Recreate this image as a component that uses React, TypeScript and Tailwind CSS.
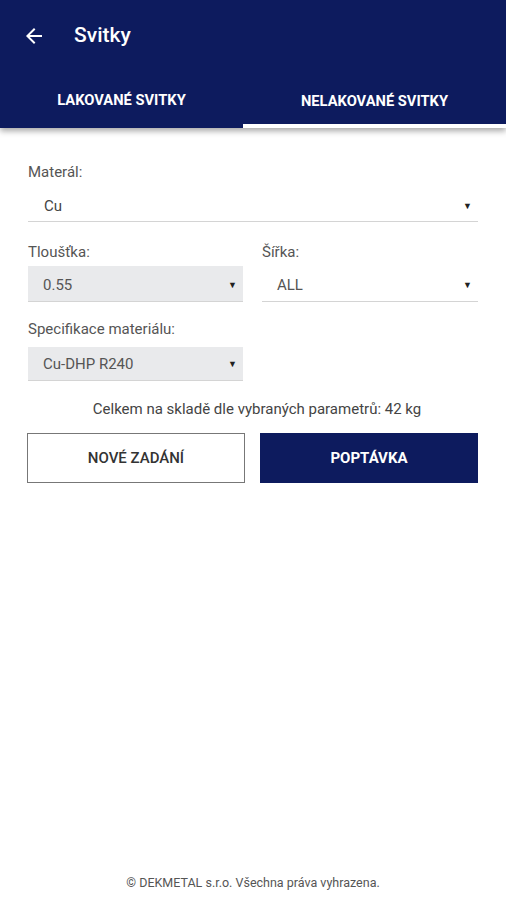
import React from "react";

const Caret = () => (
  <span className="text-[9px] text-[#222] leading-none">▼</span>
);

export default function App() {
  return (
    <div className="w-[506px] h-[900px] bg-white flex flex-col font-['Roboto',sans-serif] text-[#333]">
      <header className="bg-[#0d1b5e] shadow-[0_3px_6px_rgba(0,0,0,0.35)] relative z-10">
        <div className="h-[74px] flex items-center pl-[22px]">
          <svg width="24" height="24" viewBox="0 0 24 24" className="mt-[-2px]">
            <path d="M20 11H7.83l5.59-5.59L12 4l-8 8 8 8 1.41-1.41L7.83 13H20v-2z" fill="#fff" />
          </svg>
          <span className="ml-[28px] mt-[-2px] text-white text-[21px] font-medium">Svitky</span>
        </div>
        <div className="flex h-[54px]">
          <div className="w-[243px] flex items-center justify-center pb-[2px]">
            <span className="text-white text-[14.7px] font-bold">LAKOVANÉ SVITKY</span>
          </div>
          <div className="flex-1 flex flex-col">
            <div className="flex-1 flex items-center justify-center pt-[4px]">
              <span className="text-white text-[14.7px] font-bold">NELAKOVANÉ SVITKY</span>
            </div>
            <div className="h-[4px] bg-white" />
          </div>
        </div>
      </header>

      <main className="flex-1 flex flex-col px-[28px] pt-[33px]">
        <label className="text-[15px] leading-[22px] text-[#555]">Materál:</label>
        <div className="mt-[9px] h-[30px] flex items-center justify-between pl-[16px] pr-[6px] border-b border-[#d4d4d4] w-[450px]">
          <span className="text-[15px] text-[#444]">Cu</span>
          <Caret />
        </div>

        <div className="flex gap-[19px] mt-[19px]">
          <div className="w-[215px] flex flex-col">
            <label className="text-[15px] leading-[22px] text-[#555]">Tloušťka:</label>
            <div className="mt-[3px] h-[36px] bg-[#e9eaec] flex items-center justify-between pl-[15px] pr-[6px] pt-[3px] border-b border-[#d4d4d4]">
              <span className="text-[15px] text-[#555]">0.55</span>
              <Caret />
            </div>
          </div>
          <div className="w-[216px] flex flex-col">
            <label className="text-[15px] leading-[22px] text-[#555]">Šířka:</label>
            <div className="mt-[3px] h-[36px] flex items-center justify-between pl-[15px] pr-[6px] pt-[3px] border-b border-[#d4d4d4]">
              <span className="text-[15px] text-[#555]">ALL</span>
              <Caret />
            </div>
          </div>
        </div>

        <label className="mt-[16px] text-[15px] leading-[22px] text-[#555]">Specifikace materiálu:</label>
        <div className="mt-[7px] w-[215px] h-[34px] bg-[#e9eaec] flex items-center justify-between pl-[15px] pr-[6px] pt-[1px] border-b border-[#d4d4d4]">
          <span className="text-[15px] text-[#555]">Cu-DHP R240</span>
          <Caret />
        </div>

        <p className="mt-[17px] text-center text-[15px] leading-[22px] text-[#444] pl-[8px]">
          Celkem na skladě dle vybraných parametrů: 42 kg
        </p>

        <div className="mt-[13px] flex gap-[15px] -ml-[1px]">
          <button className="w-[219px] h-[50px] border border-[#777] bg-white text-[15px] font-medium text-[#333]">
            NOVÉ ZADÁNÍ
          </button>
          <button className="w-[219px] h-[50px] bg-[#0d1b5e] text-white text-[15px] font-bold">
            POPTÁVKA
          </button>
        </div>

        <div className="flex-1" />
        <p className="text-center text-[12.5px] text-[#555] pb-[7px]">
          © DEKMETAL s.r.o. Všechna práva vyhrazena.
        </p>
      </main>
    </div>
  );
}
